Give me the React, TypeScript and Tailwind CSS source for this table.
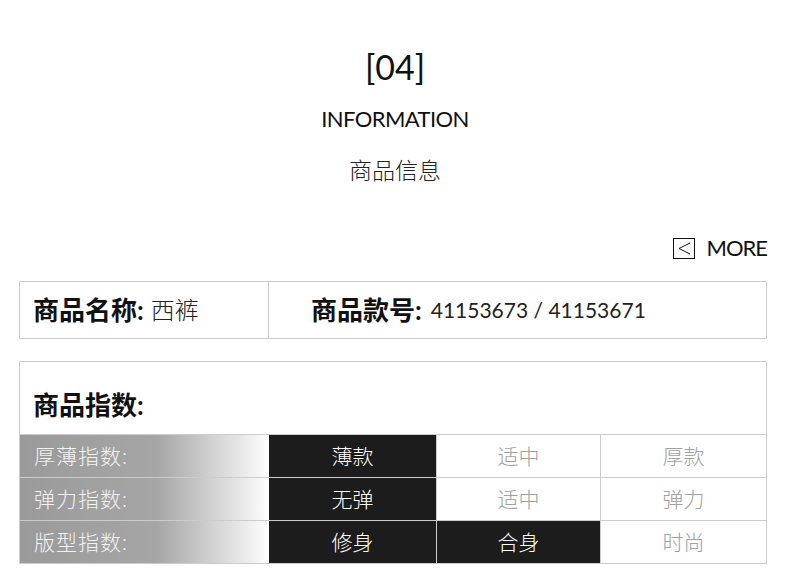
import React from "react";

const rows = [
  { label: "厚薄指数:", opts: ["薄款", "适中", "厚款"], on: [true, false, false] },
  { label: "弹力指数:", opts: ["无弹", "适中", "弹力"], on: [true, false, false] },
  { label: "版型指数:", opts: ["修身", "合身", "时尚"], on: [true, true, false] },
];

const font = { fontFamily: '"Lato", "Noto Sans CJK SC", sans-serif' };

export default function App() {
  return (
    <div className="w-[790px] h-[571px] bg-white overflow-hidden" style={font}>
      <div className="flex flex-col items-center pt-[47px]">
        <div className="text-[34px] leading-[40px] text-[#111]">[04]</div>
        <div className="mt-[17px] text-[22px] leading-[30px] tracking-[-0.6px] text-[#111]">INFORMATION</div>
        <div className="mt-[21px] text-[23px] leading-[30px] text-[#222] font-light">商品信息</div>
      </div>

      <div className="flex justify-end items-center mr-[23px] mt-[50px] gap-[11px]">
        <div className="w-[22px] h-[21px] border border-[#111] flex items-center justify-center">
          <svg width="16" height="15" viewBox="0 0 16 15">
            <path d="M14 2 L3 7.5 L14 13" fill="none" stroke="#111" strokeWidth="1" />
          </svg>
        </div>
        <div className="text-[22px] leading-[26px] tracking-[-1px] text-[#111]">MORE</div>
      </div>

      <div className="ml-[19px] mr-[23px] mt-[20px] h-[58px] border border-[#ccc] flex">
        <div className="w-[249px] border-r border-[#ccc] flex items-center pl-[13px]">
          <span className="font-bold text-[26px] text-[#111]">商品名称:</span>
          <span className="ml-[7px] text-[24px] font-light text-[#222]">西裤</span>
        </div>
        <div className="flex items-center pl-[42px]">
          <span className="font-bold text-[26px] text-[#111]">商品款号:</span>
          <span className="ml-[9px] text-[21px] text-[#222]">41153673 / 41153671</span>
        </div>
      </div>

      <div className="ml-[19px] mr-[23px] mt-[22px] border border-[#ccc] border-b-0">
        <div className="h-[72px] flex items-end pb-[9px] pl-[13px] text-[26px] font-bold text-[#111]">商品指数:</div>
        {rows.map((r) => (
          <div key={r.label} className="flex h-[43px] border-t border-[#ccc]">
            <div className="w-[249px] flex items-center pl-[14px] text-[21px] font-light text-[#f2f2f2] tracking-[1px] bg-[linear-gradient(to_right,#9a9a9a_0%,#a6a6a6_55%,#f4f4f4_95%,#ffffff_100%)]">
              {r.label}
            </div>
            {r.opts.map((o, i) => (
              <div
                key={o + i}
                className={
                  (i === 0 ? "w-[167px] " : i === 1 ? "w-[164px] border-l border-[#ccc] " : "flex-1 border-l border-[#ccc] ") +
                  "flex items-center justify-center text-[21px] font-light " +
                  (r.on[i] ? "bg-[#1c1c1c] text-white" : "bg-white text-[#a0a0a0]")
                }
              >
                {o}
              </div>
            ))}
          </div>
        ))}
        <div className="border-b border-[#ccc]" />
      </div>
    </div>
  );
}
